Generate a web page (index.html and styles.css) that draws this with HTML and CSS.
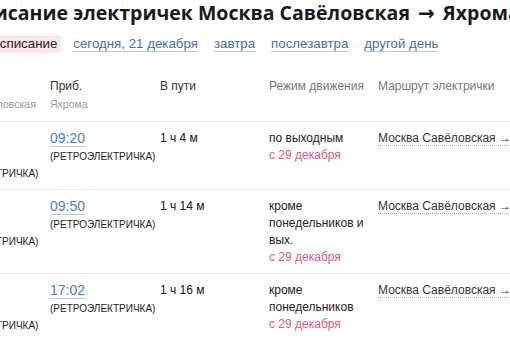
FILE: index.html
```html
<!DOCTYPE html>
<html lang="ru">
<head>
<meta charset="utf-8">
<title>Расписание электричек</title>
<link rel="stylesheet" href="styles.css">
</head>
<body>
<div class="page">
  <h1 class="title">Расписание электричек Москва Савёловская <span class="arrow">→</span> Яхрома</h1>
  <nav class="days">
    <span class="day active">Расписание</span>
    <a class="day link" href="#">сегодня, 21 декабря</a>
    <a class="day link" href="#">завтра</a>
    <a class="day link" href="#">послезавтра</a>
    <a class="day link" href="#">другой день</a>
  </nav>
  <div class="table">
    <div class="row head">
      <div class="cell"><div class="hd">Отпр.</div><div class="sub">Москва Савёловская</div></div>
      <div class="cell"><div class="hd">Приб.</div><div class="sub">Яхрома</div></div>
      <div class="cell"><div class="hd">В пути</div></div>
      <div class="cell"><div class="hd muted">Режим движения</div></div>
      <div class="cell"><div class="hd muted">Маршрут электрички</div></div>
    </div>
    <div class="row">
      <div class="cell"><div class="line"><a class="time" href="#">08:04</a></div><div class="line"> </div><div class="line kind">(Ретроэлектричка)</div></div>
      <div class="cell"><div class="line"><a class="time" href="#">09:20</a></div><div class="line kind">(Ретроэлектричка)</div></div>
      <div class="cell"><div class="line dur">1 ч 4 м</div></div>
      <div class="cell mode"><div class="line">по выходным</div><div class="line date">с 29 декабря</div></div>
      <div class="cell"><div class="line"><a class="route" href="#">Москва Савёловская → Яхрома</a></div></div>
    </div>
    <div class="row">
      <div class="cell"><div class="line"><a class="time" href="#">08:36</a></div><div class="line"> </div><div class="line kind">(Ретроэлектричка)</div></div>
      <div class="cell"><div class="line"><a class="time" href="#">09:50</a></div><div class="line kind">(Ретроэлектричка)</div></div>
      <div class="cell"><div class="line dur">1 ч 14 м</div></div>
      <div class="cell mode"><div class="line">кроме понедельников и вых.</div><div class="line date">с 29 декабря</div></div>
      <div class="cell"><div class="line"><a class="route" href="#">Москва Савёловская → Яхрома</a></div></div>
    </div>
    <div class="row">
      <div class="cell"><div class="line"><a class="time" href="#">15:46</a></div><div class="line"> </div><div class="line kind">(Ретроэлектричка)</div></div>
      <div class="cell"><div class="line"><a class="time" href="#">17:02</a></div><div class="line kind">(Ретроэлектричка)</div></div>
      <div class="cell"><div class="line dur">1 ч 16 м</div></div>
      <div class="cell mode"><div class="line">кроме понедельников</div><div class="line date">с 29 декабря</div></div>
      <div class="cell"><div class="line"><a class="route" href="#">Москва Савёловская → Яхрома</a></div></div>
    </div>
  </div>
</div>
</body>
</html>
```
FILE: styles.css
```css
html, body {
  margin: 0;
  padding: 0;
  background: #fff;
  overflow: hidden;
}
body {
  width: 510px;
  height: 340px;
  font-family: "Liberation Sans", Arial, sans-serif;
  color: #222;
}
.page {
  margin-left: -67px;
  width: 760px;
}
.title {
  margin: 0;
  padding-left: 14px;
  font-family: "Open Sans", "Liberation Sans", sans-serif;
  font-weight: 700;
  font-size: 19.5px;
  line-height: 26px;
  color: #1a1a1a;
  white-space: nowrap;
}
.arrow {
  display: inline-block;
  margin: 0 3px;
  font-family: "DejaVu Sans", sans-serif;
  font-weight: 700;
  font-size: 20px;
}
.days {
  display: flex;
  align-items: center;
  gap: 12px;
  margin-top: 9px;
  padding-left: 47px;
  font-size: 13.3px;
  line-height: 18px;
  white-space: nowrap;
}
.day {
  display: block;
}
.active {
  background: #fde6e9;
  color: #222;
  padding: 0 4px;
  border-radius: 3px;
}
.link {
  color: #3f70ac;
  text-decoration: none;
  border-bottom: 1px solid #b7c9e0;
  line-height: 15px;
}
.link + .link {
  margin-left: 4px;
}
.table {
  margin-top: 25px;
}
.row {
  display: grid;
  grid-template-columns: 117px 110px 109px 109px 300px;
  padding: 8px 0 7px;
  border-top: 1px solid #e9e9e9;
  font-size: 12px;
  line-height: 17px;
}
.row.head {
  border-top: 0;
  padding: 0 0 8px;
}
.hd {
  font-size: 12px;
  color: #333;
}
.hd.muted {
  color: #777;
}
.sub {
  margin-top: 1px;
  font-size: 10.5px;
  color: #999;
}
.line {
  min-height: 17px;
  white-space: nowrap;
}
.mode .line {
  white-space: normal;
  width: 100px;
}
.dur {
  color: #111;
}
.time {
  font-size: 14px;
  color: #4a7fb9;
  text-decoration: none;
  border-bottom: 1px solid #b6cbe3;
}
.kind {
  font-size: 10px;
  text-transform: uppercase;
  color: #222;
}
.date {
  color: #e2577d;
}
.route {
  color: #333;
  text-decoration: none;
  border-bottom: 1px dotted #aaa;
}
```
